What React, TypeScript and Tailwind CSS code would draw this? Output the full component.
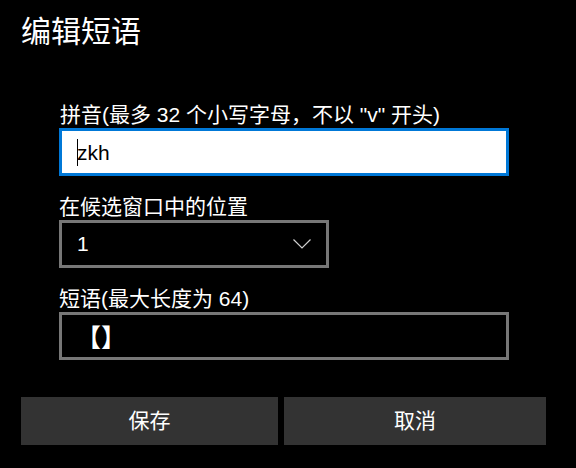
import React from "react";

const font = { fontFamily: '"Liberation Sans", "Noto Sans CJK SC", sans-serif' };

export default function App() {
  return (
    <div className="w-[576px] h-[468px] bg-black text-white overflow-hidden flex flex-col" style={font}>
      <div className="pl-[21px] pt-[12px] h-[44px] text-[30px] leading-[40px]">编辑短语</div>

      <div className="pl-[59px] pt-[58px] flex flex-col">
        <div className="h-[26px] text-[21px] leading-[26px] pl-[1px]">拼音(最多 32 个小写字母，不以 "v" 开头)</div>
        <div className="w-[450px] h-[48px] border-[3px] border-[#0078d7] bg-white flex items-center pl-[15px]">
          <span className="w-[1px] h-[27px] bg-black" />
          <span className="text-black text-[21px] leading-[26px] -ml-[1px] mt-[1px]">zkh</span>
        </div>

        <div className="mt-[18px] h-[26px] text-[21px] leading-[26px]">在候选窗口中的位置</div>
        <div className="w-[270px] h-[48px] border-[3px] border-[#777777] flex items-center justify-between pl-[15px] pr-[15px]">
          <span className="text-[21px] leading-[26px]">1</span>
          <svg width="18" height="10" viewBox="0 0 18 10" fill="none">
            <path d="M0.5 0.5 L9 9 L17.5 0.5" stroke="#cfcfcf" strokeWidth="1.2" />
          </svg>
        </div>

        <div className="mt-[18px] h-[26px] text-[21px] leading-[26px]">短语(最大长度为 64)</div>
        <div className="w-[450px] h-[48px] border-[3px] border-[#777777] flex items-center pl-[14px]">
          <span className="text-[25px] leading-[28px] font-bold" style={{ fontFamily: '"Noto Sans CJK SC", sans-serif' }}>【】</span>
        </div>
      </div>

      <div className="pl-[21px] pt-[37px] flex gap-[6px]">
        <div className="w-[257px] h-[48px] bg-[#333333] flex items-center justify-center text-[21px]">保存</div>
        <div className="w-[262px] h-[48px] bg-[#333333] flex items-center justify-center text-[21px]">取消</div>
      </div>
    </div>
  );
}
